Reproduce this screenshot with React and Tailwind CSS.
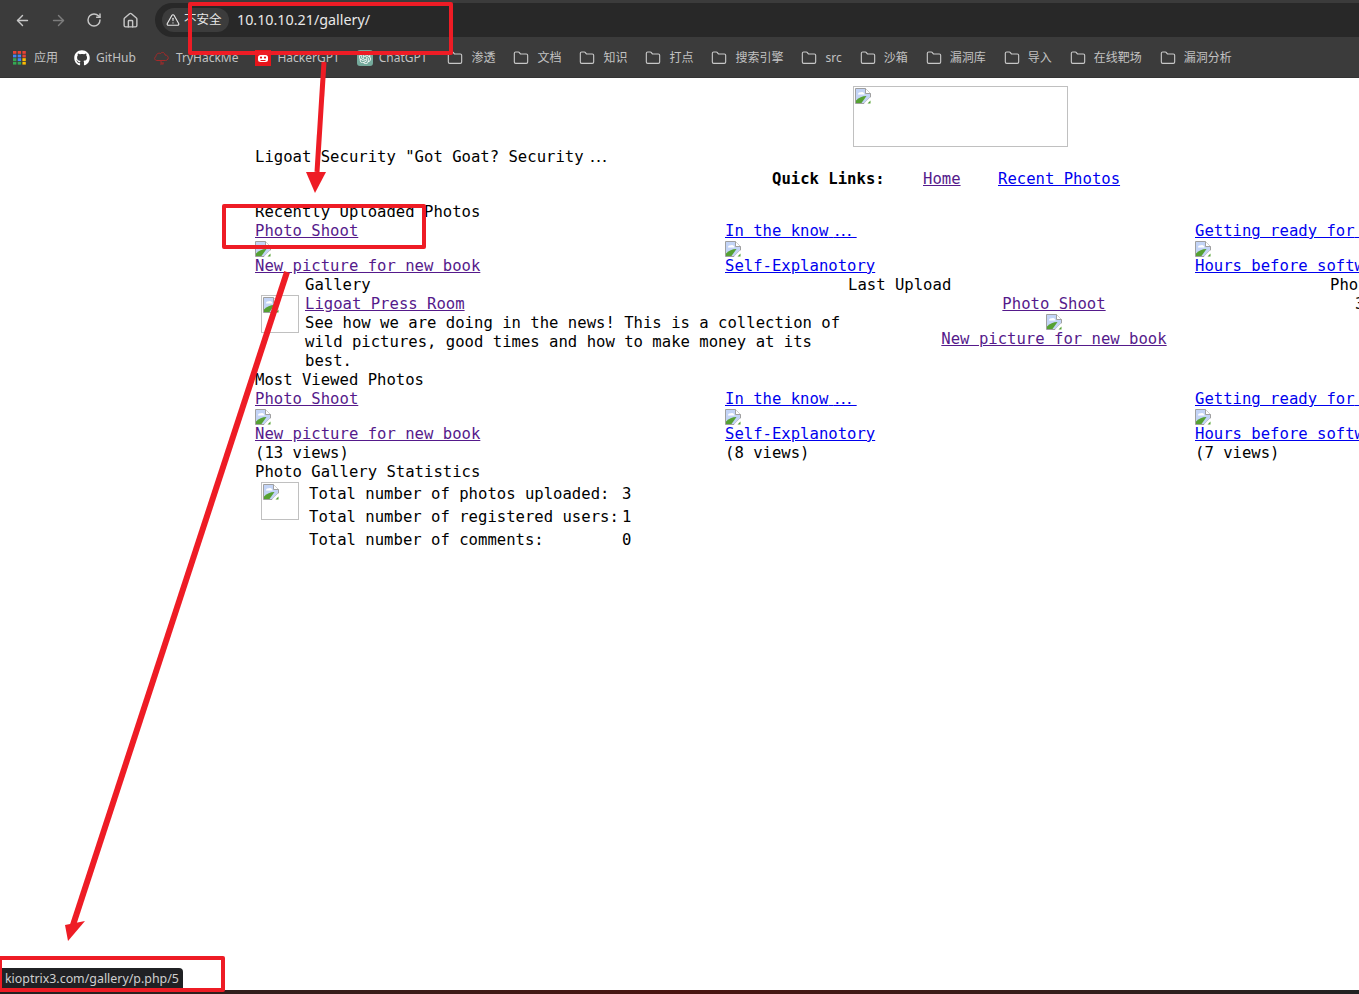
import { ArrowLeft, ArrowRight, RotateCw, Home, TriangleAlert, Folder } from 'lucide-react';
import { FaGithub } from 'react-icons/fa';
import { SiOpenai } from 'react-icons/si';

const VISITED = 'text-[#551a8b] underline';
const FRESH = 'text-[#0000ee] underline';

const folders = ['渗透', '文档', '知识', '打点', '搜索引擎', 'src', '沙箱', '漏洞库', '导入', '在线靶场', '漏洞分析'];

// Chrome's broken image placeholder
function BrokenImage({ className = '' }) {
  return (
    <svg width="16" height="16" viewBox="0 0 16 16" className={`block ${className}`}>
      <path d="M0.5 0.5H10.5L15.5 5.5V9L12 12.5L9 15.5H0.5Z" fill="#c3d4f6" stroke="#a0a0a0" />
      <path d="M10.5 0.5V5.5H15.5" fill="#fff" stroke="#a0a0a0" />
      <path d="M3 6.5C3 4.5 5 4 6 4.5C7 3.5 9.5 4.5 9.5 6.5Z" fill="#fff" />
      <path d="M1 15V12.5C4 9.5 7 8 11.5 8L6.5 15Z" fill="#55a132" />
      <path d="M15.5 9L9 15.5H12L15.5 12Z" fill="#fff" />
      <path d="M15.5 12.5V15.5H12.5Z" fill="#55a132" />
    </svg>
  );
}

// the site's "..." sits closer together than the mono cells
function Dots() {
  return (
    <>
      <span className="tracking-[-4px]"> </span>
      <span className="font-['Liberation_Sans'] text-[19px] leading-[0] tracking-[4px]">…</span>
    </>
  );
}

function AppsIcon() {
  const colors = ['#ea4335', '#ea4335', '#ea4335', '#4285f4', '#4285f4', '#ea4335', '#34a853', '#4285f4', '#fbbc04', '#34a853', '#34a853', '#fbbc04'];
  return (
    <svg width="13" height="14" viewBox="0 0 13 14">
      {colors.map((c, i) => (
        <rect key={i} x={(i % 3) * 4.7} y={Math.floor(i / 3) * 3.6} width="3.4" height="2.8" fill={c} />
      ))}
    </svg>
  );
}

function TryHackMeIcon() {
  return (
    <svg width="17" height="17" viewBox="0 0 17 17" fill="none" stroke="#a52a2a" strokeWidth="1">
      <path d="M4 10.5C1.5 10.5 .8 7.5 3 6.5C3 4 5.5 2.5 7.5 3.5C9 1.5 12 2.5 12 5C14.5 5 15.8 7 15 9C14.5 10 13.5 10.5 12.5 10.5H4Z" />
      <path d="M8 10.5V13H11M7 14H10.5" />
    </svg>
  );
}

function HackerGptIcon() {
  return (
    <svg width="16" height="16" viewBox="0 0 16 16">
      <rect width="16" height="16" fill="#e7141a" />
      <rect x="3" y="5" width="10" height="7" rx="2.5" fill="#fff" />
      <circle cx="6" cy="7.6" r="1.1" fill="#e7141a" />
      <circle cx="10" cy="7.6" r="1.1" fill="#e7141a" />
      <rect x="5.5" y="10" width="5" height="1" fill="#e7141a" />
    </svg>
  );
}

function Bookmark({ icon, label }) {
  return (
    <div className="flex items-center gap-[6px] shrink-0">
      {icon}
      <span>{label}</span>
    </div>
  );
}

function FolderMark({ label }) {
  return (
    <div className="flex items-center gap-[8px] shrink-0">
      <Folder size={16} strokeWidth={1.7} className="text-[#c7c7c7]" />
      <span>{label}</span>
    </div>
  );
}

function BrowserBar() {
  return (
    <div className="bg-[#3b3b3b] shrink-0" style={{ fontFamily: '"Noto Sans", "Noto Sans CJK SC", sans-serif' }}>
      <div className="h-[37px] pt-[3px] flex items-center">
        <div className="w-[155px] pl-[14px] flex items-center gap-[19px] text-[#c7c7c7] shrink-0">
          <ArrowLeft size={17} strokeWidth={2} />
          <ArrowRight size={17} strokeWidth={2} className="text-[#7d7d7d]" />
          <RotateCw size={16} strokeWidth={2.2} />
          <Home size={17} strokeWidth={2} className="ml-[1px]" />
        </div>
        <div className="flex-1 h-[34px] bg-[#282828] rounded-l-[17px] flex items-center pl-[7px]">
          <div className="h-[24px] w-[67px] rounded-full bg-[#3c3c3c] flex items-center pl-[4px] gap-[4px] text-[12.5px] text-[#e6e6e6]">
            <TriangleAlert size={14} strokeWidth={2} />
            <span>不安全</span>
          </div>
          <span className="ml-[8px] text-[14.3px] text-[#e8e8e8]">10.10.10.21/gallery/</span>
        </div>
      </div>
      <div className="h-[41px] pt-[2px] flex items-center pl-[13px] gap-[17px] text-[12px] text-[#c2c2c2] whitespace-nowrap border-b border-[#333]">
        <div className="flex items-center gap-[8px] shrink-0 mr-[-1px]">
          <AppsIcon />
          <span>应用</span>
        </div>
        <Bookmark icon={<FaGithub size={16} className="text-white" />} label="GitHub" />
        <Bookmark icon={<TryHackMeIcon />} label="TryHackMe" />
        <Bookmark icon={<HackerGptIcon />} label="HackerGPT" />
        <Bookmark
          icon={
            <span className="w-[16px] h-[16px] rounded-[3px] bg-[#74aa9c] flex items-center justify-center">
              <SiOpenai size={12} className="text-white" />
            </span>
          }
          label="ChatGPT"
        />
        <div className="flex items-center gap-[18px] ml-[3px]">
          {folders.map((f) => <FolderMark key={f} label={f} />)}
        </div>
      </div>
    </div>
  );
}

function PhotoCard({ album, albumClass, title, titleClass, views }) {
  return (
    <div>
      <a className={albumClass}>{album}</a>
      <BrokenImage />
      <a className={titleClass}>{title}</a>
      {views && <div>{views}</div>}
    </div>
  );
}

function PhotoRow({ withViews }) {
  return (
    <div className="grid grid-cols-[470px_470px_470px] whitespace-pre">
      <PhotoCard album="Photo Shoot" albumClass={VISITED} title="New picture for new book" titleClass={VISITED} views={withViews && '(13 views)'} />
      <PhotoCard album={<>In the know<Dots /></>} albumClass={FRESH} title="Self-Explanotory" titleClass={FRESH} views={withViews && '(8 views)'} />
      <PhotoCard album={<>Getting ready for<Dots /></>} albumClass={FRESH} title={<>Hours before software<Dots /></>} titleClass={FRESH} views={withViews && '(7 views)'} />
    </div>
  );
}

function GallerySection() {
  return (
    <div>
      <div className="grid grid-cols-[50px_543px_482px_auto] whitespace-nowrap">
        <div />
        <div>Gallery</div>
        <div>Last Upload</div>
        <div>Photos</div>
      </div>
      <div className="flex">
        <div className="w-[50px] shrink-0 pl-[6px]">
          <div className="w-[38px] h-[38px] border border-[#c0c0c0] pl-[1px] pt-[1px]">
            <BrokenImage />
          </div>
        </div>
        <div className="w-[636px] shrink-0">
          <a className={VISITED}>Ligoat Press Room</a>
          <p className="w-[540px]">
            See how we are doing in the news! This is a collection of wild pictures, good times and how to make money at its best.
          </p>
        </div>
        <div className="w-[226px] shrink-0 flex flex-col items-center whitespace-nowrap">
          <a className={VISITED}>Photo Shoot</a>
          <BrokenImage />
          <a className={VISITED}>New picture for new book</a>
        </div>
        <div className="pl-[188px]">3</div>
      </div>
    </div>
  );
}

function StatsSection() {
  const rows = [
    ['Total number of photos uploaded:', '3'],
    ['Total number of registered users:', '1'],
    ['Total number of comments:', '0'],
  ];
  return (
    <div className="flex">
      <div className="w-[54px] shrink-0 pl-[6px]">
        <div className="w-[38px] h-[38px] border border-[#c0c0c0] pl-[1px] pt-[1px]">
          <BrokenImage />
        </div>
      </div>
      <div className="pt-[1px]">
        {rows.map(([label, value]) => (
          <div key={label} className="flex items-center h-[23px] whitespace-nowrap">
            <span className="w-[313px]">{label}</span>
            <span>{value}</span>
          </div>
        ))}
      </div>
    </div>
  );
}

// Red markup drawn over the screenshot
function Annotations() {
  return (
    <svg className="absolute inset-0 pointer-events-none" width="1359" height="994" viewBox="0 0 1359 994">
      <g fill="none" stroke="#ee1c25" strokeWidth="4" strokeLinejoin="round">
        <rect x="190" y="4" width="261" height="49" />
        <rect x="224" y="206" width="200" height="41" />
        <rect x="0" y="958" width="223" height="32" />
        <path d="M324 62L317 172" strokeWidth="5" />
        <path d="M287 272L73 925" strokeWidth="6" />
      </g>
      <path d="M306 172L326 172L315 193Z" fill="#ee1c25" />
      <path d="M65 925L85 921L68 941Z" fill="#ee1c25" />
    </svg>
  );
}

export default function App() {
  return (
    <div className="relative w-[1359px] h-[994px] overflow-hidden flex flex-col bg-white">
      <BrowserBar />
      <main
        className="flex-1 overflow-hidden text-[15.6px] leading-[19px] text-black"
        style={{ fontFamily: '"DejaVu Sans Mono", monospace' }}
      >
        <div className="ml-[853px] mt-[8px] w-[215px] h-[61px] border border-[#c0c0c0] pl-[1px] pt-[1px]">
          <BrokenImage />
        </div>
        <div className="flex pl-[255px] whitespace-pre">
          <div className="w-[517px] shrink-0 pt-[1px]">Ligoat Security "Got Goat? Security<Dots /></div>
          <div className="mt-[23px] flex">
            <b className="w-[151px]">Quick Links:</b>
            <a className={`${VISITED} w-[75px]`}>Home</a>
            <a className={FRESH}>Recent Photos</a>
          </div>
        </div>
        <div className="pl-[255px] mt-[14px] w-[1800px]">
          <div>Recently Uploaded Photos</div>
          <PhotoRow />
          <GallerySection />
          <div>Most Viewed Photos</div>
          <PhotoRow withViews />
          <div>Photo Gallery Statistics</div>
          <StatsSection />
        </div>
      </main>
      <div className="h-[4px] shrink-0 bg-gradient-to-r from-[#222222] via-[#4a1410] to-[#222222]" />
      <div className="absolute left-[2px] top-[968px] h-[22px] w-[181px] bg-[#202124] rounded-tr-[4px] flex items-center pl-[3px] text-[12.4px] text-[#cfcfcf] whitespace-nowrap" style={{ fontFamily: '"Noto Sans", sans-serif' }}>
        kioptrix3.com/gallery/p.php/5
      </div>
      <Annotations />
    </div>
  );
}
